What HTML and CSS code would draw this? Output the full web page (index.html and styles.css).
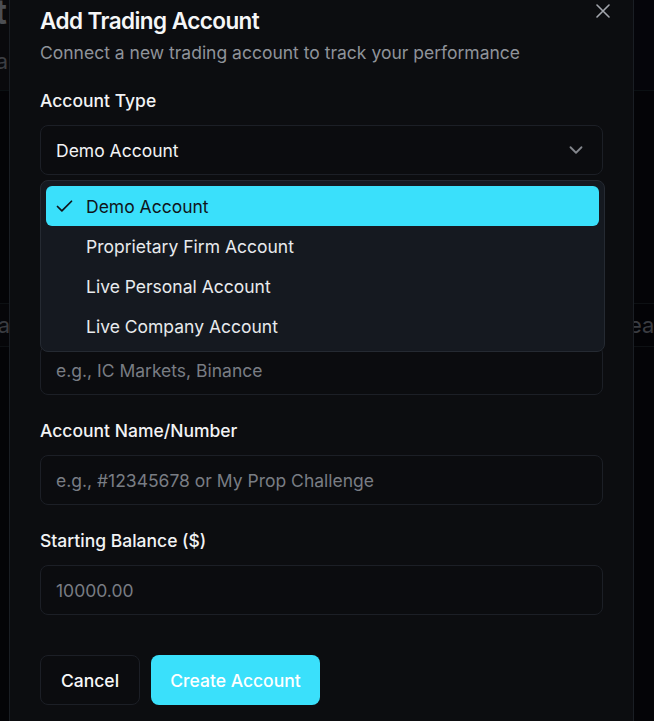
FILE: index.html
```html
<!DOCTYPE html>
<html lang="en">
<head>
<meta charset="utf-8">
<title>Add Trading Account</title>
<link rel="stylesheet" href="styles.css">
</head>
<body>
<div class="page">
  <div class="pg-head pg-left">
    <div class="clip"><span class="bg-title">Accounts list</span></div>
    <div class="clip"><span class="bg-sub">Total balance data</span></div>
  </div>
  <div class="pg-head pg-right"></div>
  <div class="pg-band pg-left band-l">
    <div class="clip"><span class="bg-cell">Java</span></div>
  </div>
  <div class="pg-band pg-right band-r">
    <span class="bg-cell">ea</span>
  </div>
</div>

<div class="modal">
  <button class="close" aria-label="Close">
    <svg width="14" height="14" viewBox="0 0 14 14" fill="none" stroke="currentColor" stroke-width="1.6" stroke-linecap="round"><path d="M1 1l12 12M13 1L1 13"/></svg>
  </button>
  <div class="header">
    <h2 class="title">Add Trading Account</h2>
    <p class="desc">Connect a new trading account to track your performance</p>
  </div>
  <div class="form">
    <div class="field">
      <label class="label">Account Type</label>
      <div class="select-wrap">
        <div class="control select">
          <span>Demo Account</span>
          <svg class="chev" width="22" height="22" viewBox="0 0 24 24" fill="none" stroke="currentColor" stroke-width="2" stroke-linecap="round" stroke-linejoin="round"><path d="m6 9 6 6 6-6"/></svg>
        </div>
        <div class="menu">
          <div class="item active">
            <svg class="check" width="21" height="21" viewBox="0 0 24 24" fill="none" stroke="currentColor" stroke-width="2" stroke-linecap="round" stroke-linejoin="round"><path d="M20 6 9 17l-5-5"/></svg>
            <span>Demo Account</span>
          </div>
          <div class="item"><span>Proprietary Firm Account</span></div>
          <div class="item"><span>Live Personal Account</span></div>
          <div class="item"><span>Live Company Account</span></div>
        </div>
      </div>
    </div>
    <div class="field hidden-field">
      <label class="label">Account Currency</label>
      <input class="control" placeholder="USD">
    </div>
    <div class="field">
      <label class="label hidden-label">Broker/Platform</label>
      <input class="control" placeholder="e.g., IC Markets, Binance">
    </div>
    <div class="field">
      <label class="label">Account Name/Number</label>
      <input class="control" placeholder="e.g., #12345678 or My Prop Challenge">
    </div>
    <div class="field">
      <label class="label">Starting Balance ($)</label>
      <input class="control" placeholder="10000.00">
    </div>
  </div>
  <div class="actions">
    <button class="btn btn-outline">Cancel</button>
    <button class="btn btn-primary">Create Account</button>
  </div>
</div>
</body>
</html>
```
FILE: styles.css
```css
* { box-sizing: border-box; }

html, body {
  margin: 0;
  height: 721px;
  overflow: hidden;
}

body {
  background: #040407;
  font-family: Inter, "Noto Sans", sans-serif;
  color: #f3f4f6;
  position: relative;
}

.page {
  display: grid;
  grid-template-columns: 9px 625px 1fr;
  grid-template-rows: 91px 212px 44px 1fr;
  height: 721px;
}

.pg-left { grid-column: 1; }
.pg-right { grid-column: 3; }
.pg-head { grid-row: 1; border-bottom: 1px solid #0b1013; }
.pg-head.pg-left { background: #09090c; }
.pg-head.pg-right { background: #05050a; }
.pg-band {
  grid-row: 3;
  border-top: 1px solid #0d1013;
  border-bottom: 1px solid #0d1013;
  display: flex;
  align-items: center;
  overflow: hidden;
}
.band-l { background: #060609; }
.band-r { background: #030306; }

.clip {
  width: 9px;
  overflow: hidden;
  display: flex;
  justify-content: flex-end;
  white-space: nowrap;
}

.bg-title {
  font-size: 34px;
  font-weight: 700;
  line-height: 28px;
  color: #4c4e53;
  margin-right: 2px;
}
.pg-head .clip:first-child { margin-top: -2px; }
.bg-sub {
  font-size: 22px;
  line-height: 28px;
  color: #3c3e43;
  margin-top: 12px;
  margin-right: 1px;
}
.pg-head .clip:last-child { margin-top: 9px; }
.bg-cell {
  font-size: 22px;
  color: #3a3c41;
  white-space: nowrap;
}
.band-l .bg-cell { margin-right: -1px; }
.band-r .bg-cell { margin-left: -5px; }

/* modal */
.modal {
  position: absolute;
  left: 9px;
  top: -21px;
  width: 625px;
  height: 780px;
  padding: 30px;
  background: #0c0d10;
  border: 1px solid #1a1e24;
}

.close {
  position: absolute;
  top: 23px;
  right: 22px;
  width: 16px;
  height: 16px;
  padding: 0;
  margin: 0;
  border: 0;
  background: none;
  color: #a3a6ad;
  display: flex;
  align-items: center;
  justify-content: center;
}

.header {
  display: flex;
  flex-direction: column;
  gap: 7.5px;
}

.title {
  margin: 0;
  font-size: 22.5px;
  line-height: 22.5px;
  font-weight: 600;
  letter-spacing: -0.025em;
  color: #f5f6f7;
}

.desc {
  margin: 0;
  font-size: 17.5px;
  line-height: 25px;
  color: #8f939a;
}

.form {
  margin-top: 24px;
  display: flex;
  flex-direction: column;
  gap: 24px;
}

.field {
  display: flex;
  flex-direction: column;
  gap: 12px;
}

.hidden-field { visibility: hidden; }
.hidden-label { visibility: hidden; }

.label {
  font-size: 17.5px;
  line-height: 24px;
  font-weight: 500;
  color: #f2f3f5;
}

.control {
  height: 50px;
  width: 100%;
  border: 1px solid #1c1f26;
  border-radius: 8px;
  background: #0b0c0f;
  padding: 0 15px;
  font-family: inherit;
  font-size: 17.5px;
  color: #f2f3f5;
  outline: none;
}

.control::placeholder { color: #797d84; }

.select-wrap { position: relative; }

.select {
  display: flex;
  align-items: center;
  justify-content: space-between;
  padding-right: 15px;
}

.chev { color: #83868c; }

.menu {
  position: absolute;
  top: 55px;
  left: 0;
  width: 565px;
  padding: 5px;
  background: #151920;
  border: 1px solid #252a32;
  border-radius: 8px;
  z-index: 2;
}

.item {
  position: relative;
  height: 40px;
  display: flex;
  align-items: center;
  padding-left: 40px;
  border-radius: 6px;
  font-size: 17.5px;
  color: #e8eaed;
}

.item.active {
  background: #3ae0fb;
  color: #10141a;
}

.check {
  position: absolute;
  left: 8px;
  top: 9.5px;
}

.actions {
  margin-top: 40px;
  display: flex;
  gap: 11px;
}

.btn {
  height: 50px;
  padding: 0 19px;
  border-radius: 8px;
  font-family: inherit;
  font-size: 17.5px;
  font-weight: 500;
  white-space: nowrap;
  cursor: pointer;
}

.btn-outline {
  width: 100px;
  background: #0b0c0f;
  border: 1px solid #1c1f26;
  color: #f7f8f9;
}

.btn-primary {
  min-width: 169px;
  background: #3ae0fb;
  border: 0;
  color: #ffffff;
}
```
